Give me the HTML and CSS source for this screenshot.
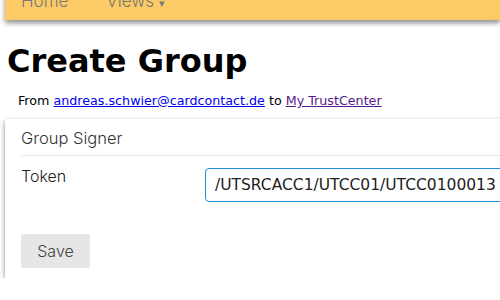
FILE: index.html
```html
<!DOCTYPE html>
<html lang="en">
<head>
    <meta charset="UTF-8">
    <title>Create Group</title>
    <link rel="stylesheet" href="styles.css">
</head>
<body>
    <div class="menu">
        <a href="#" class="menu-link">Home</a>
        <a href="#" class="menu-link">Views <span class="caret">&#9662;</span></a>
    </div>

    <h1>Create Group</h1>
    <p class="origin">From <a href="#">andreas.schwier@cardcontact.de</a> to <a href="#" class="visited">My TrustCenter</a></p>

    <form class="card">
        <fieldset>
            <legend>Group Signer</legend>
            <div class="control-group">
                <label for="token">Token</label>
                <input id="token" type="text" value="/UTSRCACC1/UTCC01/UTCC0100013">
            </div>
        </fieldset>
        <button type="button" class="button">Save</button>
    </form>
</body>
</html>
```

FILE: styles.css
```css
body {
    margin: 0;
    font-family: "DejaVu Sans", sans-serif;
    background-color: white;
    overflow: hidden;
}
.menu {
    display: flex;
    margin-left: 5px;
    margin-top: -18px;
    height: 38px;
    padding-left: 16px;
    background-color: #fdcb66;
    box-shadow: 0 3px 5px rgba(0, 0, 0, 0.45);
    align-items: center;
}
.menu-link {
    color: #777;
    font-family: Inter, sans-serif;
    font-weight: 300;
    font-size: 17px;
    text-decoration: none;
    margin-right: 38px;
}
.caret {
    font-size: 11px;
}
h1 {
    font-size: 32px;
    font-weight: bold;
    margin: 22px 0 0 7px;
}
.origin {
    font-size: 12.7px;
    margin: 13px 0 0 18px;
}
.origin a {
    color: #0000ee;
}
.origin a.visited {
    color: #551a8b;
}
.card {
    margin: 11px 0 0 5px;
    width: 560px;
    padding: 9px 16px 10px;
    background-color: white;
    box-shadow: 0 2px 5px rgba(0, 0, 0, 0.45);
    font-family: Inter, sans-serif;
    font-weight: 300;
}
fieldset {
    border: none;
    margin: 0;
    padding: 0;
}
legend {
    display: block;
    width: 100%;
    padding: 0 0 7px;
    font-size: 16.5px;
    color: #333;
    border-bottom: 1px solid #e5e5e5;
}
.control-group {
    display: flex;
    align-items: flex-start;
    margin-top: 10px;
}
label {
    width: 184px;
    font-size: 16px;
    color: #222;
}
input {
    margin-top: 2px;
    width: 400px;
    height: 34px;
    box-sizing: border-box;
    padding: 0 9px;
    border: 1px solid #1f8dd6;
    border-radius: 4px;
    font-family: "DejaVu Sans", sans-serif;
    font-size: 15.5px;
    color: #222;
}
.button {
    display: block;
    margin-top: 32px;
    width: 69px;
    height: 34px;
    border: none;
    border-radius: 2px;
    background-color: #e6e6e6;
    color: #444;
    font-family: Inter, sans-serif;
    font-weight: 300;
    font-size: 16px;
}
```
